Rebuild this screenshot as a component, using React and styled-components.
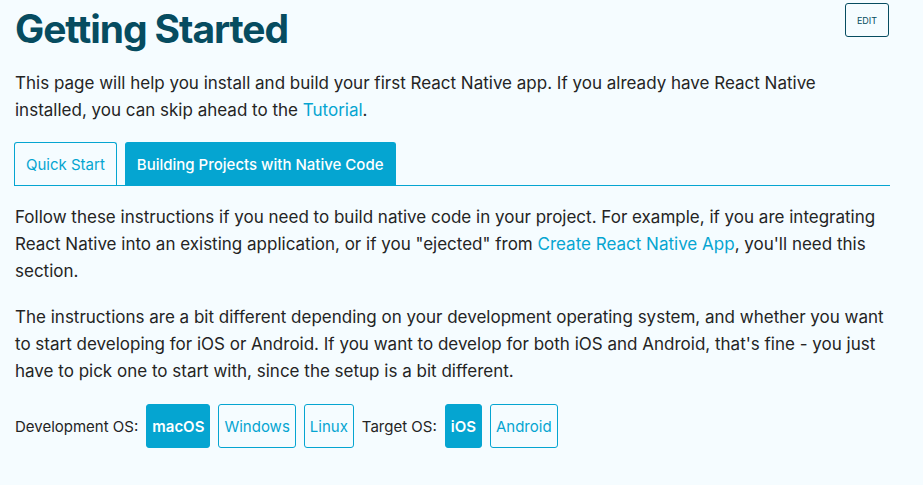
import React from "react";
import styled, { createGlobalStyle, css } from "styled-components";

const Global = createGlobalStyle`
  html, body { margin: 0; padding: 0; background: #f5fcff; }
  body { font-family: Inter, "Liberation Sans", Arial, sans-serif; color: #242424; }
`;

const Page = styled.div`
  padding: 0 33px 0 15px;
`;

const HeaderRow = styled.div`
  display: flex;
  justify-content: space-between;
  align-items: flex-start;
`;

const Title = styled.h1`
  margin: 0;
  padding-top: 5px;
  font-size: 39px;
  line-height: 48px;
  font-weight: 700;
  letter-spacing: -1.1px;
  color: #064c60;
`;

const EditButton = styled.a`
  margin-top: 3px;
  margin-right: 1px;
  box-sizing: border-box;
  width: 44px;
  height: 34px;
  display: flex;
  align-items: center;
  justify-content: center;
  border: 1px solid #064c60;
  border-radius: 3px;
  font-size: 9px;
  color: #064c60;
  text-transform: uppercase;
`;

const Para = styled.p`
  margin: ${(p) => p.$mt || 0}px 0 0;
  font-size: 17px;
  line-height: 27px;
`;

const Link = styled.a`
  color: #05a5d1;
  text-decoration: none;
`;

const TabBar = styled.div`
  display: flex;
  gap: 8px;
  margin: 18px 0 0 -1px;
  border-bottom: 1px solid #05a5d1;
`;

const Tab = styled.div`
  box-sizing: border-box;
  height: 43px;
  padding: 0 11px;
  display: flex;
  align-items: center;
  font-size: 15px;
  border: 1px solid #05a5d1;
  border-bottom: none;
  border-radius: 3px 3px 0 0;
  ${(p) =>
    p.$active
      ? css`background: #05a5d1; color: #fff; font-weight: 500;`
      : css`background: transparent; color: #05a5d1;`}
`;

const Toggles = styled.div`
  display: flex;
  align-items: center;
  gap: 8px;
  margin-top: 19px;
  font-size: 15px;
`;

const Label = styled.span`
  color: #242424;
`;

const Toggle = styled.div`
  box-sizing: border-box;
  height: 44px;
  padding: 0 5px;
  display: flex;
  align-items: center;
  border: 1px solid #05a5d1;
  border-radius: 3px;
  font-size: 15px;
  ${(p) =>
    p.$active
      ? css`background: #05a5d1; color: #fff; font-weight: 600;`
      : css`background: transparent; color: #05a5d1;`}
`;

export default function App() {
  return (
    <>
      <Global />
      <Page>
        <HeaderRow>
          <Title>Getting Started</Title>
          <EditButton>Edit</EditButton>
        </HeaderRow>
        <Para $mt={17}>
          This page will help you install and build your first React Native app. If you already have React Native
          installed, you can skip ahead to the <Link>Tutorial</Link>.
        </Para>
        <TabBar>
          <Tab>Quick Start</Tab>
          <Tab $active>Building Projects with Native Code</Tab>
        </TabBar>
        <Para $mt={18}>
          Follow these instructions if you need to build native code in your project. For example, if you are
          integrating React Native into an existing application, or if you "ejected" from{" "}
          <Link>Create React Native App</Link>, you'll need this section.
        </Para>
        <Para $mt={19}>
          The instructions are a bit different depending on your development operating system, and whether you want
          to start developing for iOS or Android. If you want to develop for both iOS and Android, that's fine - you
          just have to pick one to start with, since the setup is a bit different.
        </Para>
        <Toggles>
          <Label>Development OS:</Label>
          <Toggle $active>macOS</Toggle>
          <Toggle>Windows</Toggle>
          <Toggle>Linux</Toggle>
          <Label>Target OS:</Label>
          <Toggle $active>iOS</Toggle>
          <Toggle>Android</Toggle>
        </Toggles>
      </Page>
    </>
  );
}
